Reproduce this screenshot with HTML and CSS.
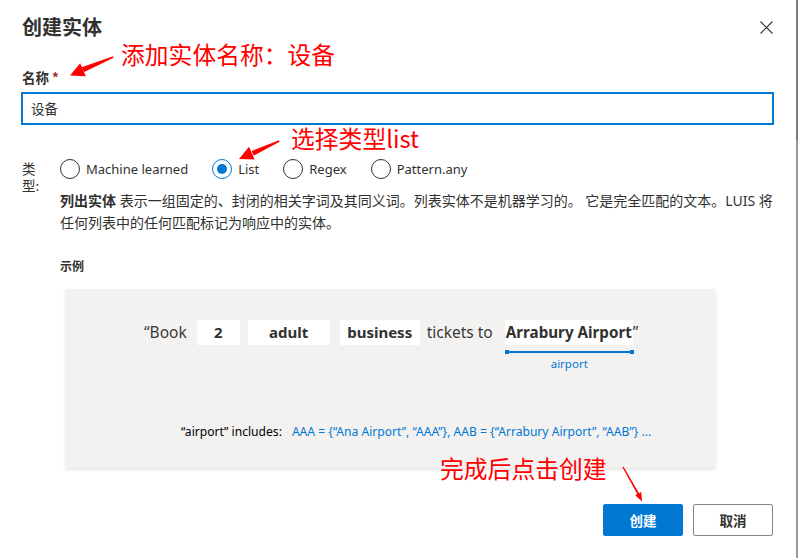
FILE: index.html
```html
<!DOCTYPE html>
<html lang="zh-CN">
<head>
<meta charset="utf-8">
<title>创建实体</title>
<link rel="stylesheet" href="styles.css">
</head>
<body>
<div class="page">
  <div class="dialog">
    <div class="header">
      <h1 class="title">创建实体</h1>
      <button class="close" aria-label="关闭">
        <svg width="13" height="13" viewBox="0 0 13 13"><path d="M0.5 0.5 L12.5 12.5 M12.5 0.5 L0.5 12.5" stroke="#323130" stroke-width="1.1" fill="none"/></svg>
      </button>
    </div>

    <label class="field-label">名称 <span class="req">*</span></label>
    <div class="input">设备</div>

    <div class="type-grid">
      <div class="type-label">类型:</div>
      <div class="type-content">
        <div class="radios">
          <div class="radio"><span class="circle"></span><span class="rtext">Machine learned</span></div>
          <div class="radio"><span class="circle on"></span><span class="rtext">List</span></div>
          <div class="radio"><span class="circle"></span><span class="rtext">Regex</span></div>
          <div class="radio"><span class="circle"></span><span class="rtext">Pattern.any</span></div>
        </div>
        <p class="desc"><b>列出实体</b>&nbsp;表示一组固定的、封闭的相关字词及其同义词。列表实体不是机器学习的。 它是完全匹配的文本。LUIS 将任何列表中的任何匹配标记为响应中的实体。</p>
        <div class="example-label">示例</div>
        <div class="example">
          <div class="sentence">
            <span class="plain">“Book</span>
            <span class="chip w43">2</span>
            <span class="chip w82">adult</span>
            <span class="chip w80">business</span>
            <span class="plain mid">tickets to</span>
            <span class="entity">
              <span class="chip tight">Arrabury Airport</span><span class="plain q">”</span>
              <span class="uline"></span>
              <span class="ent-name">airport</span>
            </span>
          </div>
          <div class="includes">
            <span class="inc-k">“airport” includes:</span>
            <span class="inc-v">AAA = {“Ana Airport”, “AAA”}, AAB = {“Arrabury Airport”, “AAB”} ...</span>
          </div>
        </div>
      </div>
    </div>

    <div class="footer">
      <button class="btn primary">创建</button>
      <button class="btn">取消</button>
    </div>
  </div>
  <div class="edge"></div>

  <div class="note n1">添加实体名称：设备</div>
  <div class="note n2">选择类型list</div>
  <div class="note n3">完成后点击创建</div>
  <svg class="arrows" width="799" height="558" viewBox="0 0 799 558">
    <g fill="#f00">
      <polygon points="113,56.3 113.6,57.8 84.2,71.9 81.8,67.3"/>
      <polygon points="70,75.5 85.8,76.2 80.2,63.2"/>
      <polygon points="279,140.3 279.6,141.8 253.8,155.6 251.6,151"/>
      <polygon points="239,159 254.6,159.6 249,146.8"/>
      <polygon points="622.4,467.3 623.6,466.7 639.2,493.6 637.6,494.4"/>
      <polygon points="642,501.5 635.2,495.3 641.2,492"/>
    </g>
  </svg>
</div>
</body>
</html>
```
FILE: styles.css
```css
* { box-sizing: border-box; }
html, body { margin: 0; padding: 0; background: #fff; }
body {
  font-family: "Noto Sans", "Noto Sans CJK SC", sans-serif;
  color: #323130;
}
.page {
  position: relative;
  width: 799px;
  height: 558px;
  display: flex;
  overflow: hidden;
}
.dialog {
  width: 796px;
  padding: 13px 0 0 22px;
}
.edge {
  width: 2px;
  background: linear-gradient(#7a7a7a 0 140px, #9a9a9a 140px);
}
.header {
  display: flex;
  justify-content: space-between;
  align-items: center;
  width: 751px;
  height: 28px;
}
.title {
  margin: 0;
  font-family: "Noto Sans CJK SC", sans-serif;
  font-size: 20px;
  line-height: 28px;
  font-weight: 600;
  color: #323130;
}
.close {
  border: 0;
  background: none;
  padding: 0;
  width: 13px;
  height: 13px;
  display: flex;
}
.field-label {
  display: block;
  margin-top: 26px;
  font-family: "Noto Sans CJK SC", sans-serif;
  font-size: 13.5px;
  line-height: 20px;
  font-weight: 600;
}
.req { color: #a4262c; font-weight: 600; }
.input {
  margin-top: 5px;
  margin-left: -1px;
  width: 753px;
  height: 33px;
  border: 2px solid #0078d4;
  padding-left: 8px;
  font-family: "Noto Sans CJK SC", sans-serif;
  font-size: 13.5px;
  line-height: 29px;
  color: #323130;
}
.type-grid {
  display: grid;
  grid-template-columns: 38px 1fr;
  margin-top: 34px;
}
.type-label {
  width: 16px;
  font-family: "Noto Sans CJK SC", sans-serif;
  font-size: 13.5px;
  line-height: 17px;
  padding-top: 1px;
}
.radios {
  display: flex;
  gap: 24px;
  height: 20px;
  align-items: center;
}
.radio { display: flex; align-items: center; gap: 6px; }
.circle {
  width: 20px;
  height: 20px;
  border-radius: 50%;
  border: 1px solid #323130;
  display: flex;
  align-items: center;
  justify-content: center;
}
.circle.on { border-color: #0078d4; }
.circle.on::after {
  content: "";
  width: 10px;
  height: 10px;
  border-radius: 50%;
  background: #0078d4;
}
.rtext { font-size: 13px; line-height: 20px; color: #323130; }
.desc {
  margin: 11px 0 0;
  width: 716px;
  font-family: "Noto Sans", "Noto Sans CJK SC", sans-serif;
  font-size: 14px;
  line-height: 22px;
  color: #323130;
}
.desc b { font-weight: 700; }
.example-label {
  margin-top: 23px;
  font-family: "Noto Sans CJK SC", sans-serif;
  font-size: 12px;
  line-height: 18px;
  font-weight: 600;
}
.example {
  margin: 14px 0 0 6px;
  width: 649px;
  height: 179px;
  background: #f3f2f1;
  box-shadow: 0 1.6px 3.6px rgba(0,0,0,.13), 0 0.3px 0.9px rgba(0,0,0,.11);
  padding-top: 31px;
}
.sentence {
  display: flex;
  align-items: flex-start;
  padding-left: 78px;
  height: 104px;
}
.plain {
  font-size: 15.5px;
  line-height: 25px;
  color: #3b3a39;
  font-weight: 400;
}
.chip {
  background: #fff;
  height: 25px;
  font-size: 15px;
  line-height: 25px;
  font-weight: 700;
  text-align: center;
  color: #323130;
  margin-left: 8px;
}
.w43 { width: 43px; margin-left: 10px; }
.w82 { width: 82px; }
.w80 { width: 80px; margin-left: 10px; }
.mid { margin-left: 7px; }
.tight { padding: 0 1px; font-size: 15.2px; margin-left: 0; }
.entity {
  position: relative;
  display: flex;
  margin-left: 12px;
}
.q { line-height: 25px; }
.uline {
  position: absolute;
  top: 31px;
  left: 0;
  width: 129px;
  height: 2px;
  background: #0078d4;
}
.uline::before, .uline::after {
  content: "";
  position: absolute;
  top: -1px;
  width: 4px;
  height: 4px;
  background: #0078d4;
}
.uline::before { left: 0; }
.uline::after { right: 0; }
.ent-name {
  position: absolute;
  top: 37px;
  left: 0;
  width: 129px;
  text-align: center;
  font-size: 11.5px;
  line-height: 14px;
  color: #0078d4;
}
.includes {
  padding-left: 115px;
  font-size: 12.1px;
  line-height: 16px;
  display: flex;
  gap: 10px;
}
.inc-k { color: #000; }
.inc-v { color: #0078d4; }
.footer {
  display: flex;
  justify-content: flex-end;
  gap: 10px;
  width: 751px;
  margin-top: 36px;
}
.btn {
  width: 80px;
  height: 32px;
  border: 1px solid #8a8886;
  border-radius: 2px;
  background: #fff;
  font-family: "Noto Sans CJK SC", sans-serif;
  font-size: 13.5px;
  font-weight: 600;
  color: #323130;
  padding: 0;
}
.btn.primary {
  background: #0078d4;
  border-color: #0078d4;
  color: #fff;
}
.note {
  position: absolute;
  font-family: "Noto Sans CJK SC", sans-serif;
  font-size: 23.8px;
  line-height: 30px;
  color: #f00;
  white-space: nowrap;
}
.n1 { left: 121px; top: 39px; }
.n2 { left: 291px; top: 123px; }
.n3 { left: 440px; top: 453px; }
.arrows {
  position: absolute;
  left: 0;
  top: 0;
  pointer-events: none;
}
```
